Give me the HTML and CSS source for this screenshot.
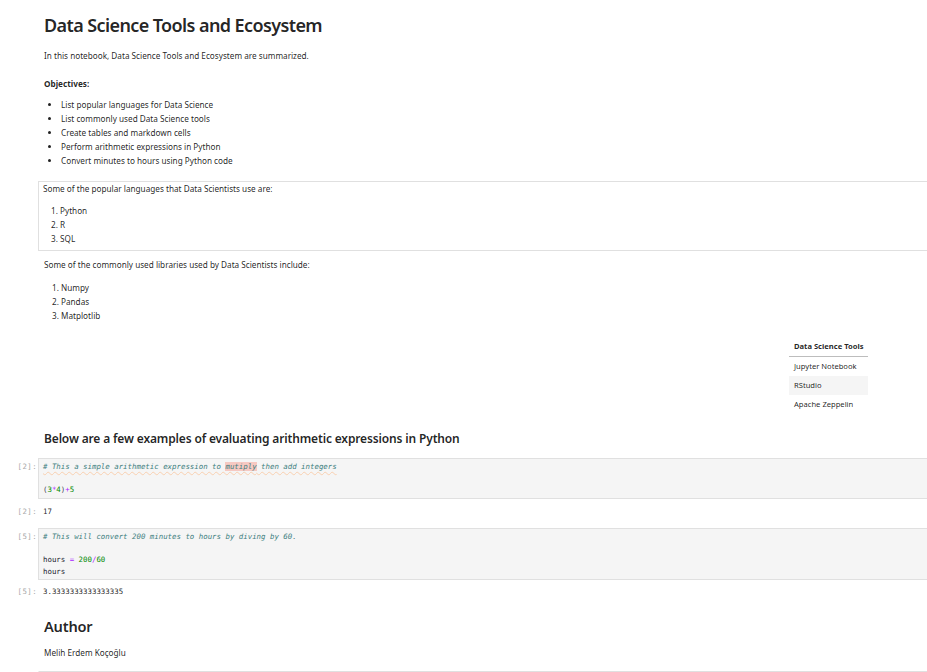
FILE: index.html
```html
<!DOCTYPE html>
<html>
<head>
<meta charset="utf-8">
<link rel="stylesheet" href="styles.css">
</head>
<body>
<div class="nb">
  <div class="cell md first">
    <div class="body">
      <h1>Data Science Tools and Ecosystem</h1>
      <p class="intro">In this notebook, Data Science Tools and Ecosystem are summarized.</p>
      <p class="obj"><strong>Objectives:</strong></p>
      <ul class="list">
        <li>List popular languages for Data Science</li>
        <li>List commonly used Data Science tools</li>
        <li>Create tables and markdown cells</li>
        <li>Perform arithmetic expressions in Python</li>
        <li>Convert minutes to hours using Python code</li>
      </ul>
    </div>
  </div>

  <div class="cell md boxed">
    <div class="body">
      <p>Some of the popular languages that Data Scientists use are:</p>
      <ol class="list">
        <li>Python</li>
        <li>R</li>
        <li>SQL</li>
      </ol>
    </div>
  </div>

  <div class="cell md libs">
    <div class="body">
      <p>Some of the commonly used libraries used by Data Scientists include:</p>
      <ol class="list">
        <li>Numpy</li>
        <li>Pandas</li>
        <li>Matplotlib</li>
      </ol>
    </div>
  </div>

  <div class="cell md tablecell">
    <div class="body">
      <table class="tools">
        <thead><tr><th>Data Science Tools</th></tr></thead>
        <tbody>
          <tr><td>Jupyter Notebook</td></tr>
          <tr><td>RStudio</td></tr>
          <tr><td>Apache Zeppelin</td></tr>
        </tbody>
      </table>
    </div>
  </div>

  <div class="cell md h2cell">
    <div class="body"><h2>Below are a few examples of evaluating arithmetic expressions in Python</h2></div>
  </div>

  <div class="cell code c1">
    <div class="prompt">[2]:</div>
    <div class="editor"><pre><span class="cm-comment wavy"># This a simple arithmetic expression to <span class="misspelled">mutiply</span> then add integers</span>
 
<span class="cm-bracket">(</span><span class="cm-number">3</span><span class="cm-op">*</span><span class="cm-number">4</span><span class="cm-bracket">)</span><span class="cm-op">+</span><span class="cm-number">5</span></pre></div>
  </div>
  <div class="cell out o1">
    <div class="prompt">[2]:</div>
    <div class="output"><pre>17</pre></div>
  </div>

  <div class="cell code c2">
    <div class="prompt">[5]:</div>
    <div class="editor"><pre><span class="cm-comment"># This will convert 200 minutes to hours by diving by 60.</span>
 
<span class="cm-var">hours</span> <span class="cm-op">=</span> <span class="cm-number">200</span><span class="cm-op">/</span><span class="cm-number">60</span>
<span class="cm-var">hours</span></pre></div>
  </div>
  <div class="cell out o2">
    <div class="prompt">[5]:</div>
    <div class="output"><pre>3.3333333333333335</pre></div>
  </div>

  <div class="cell md author">
    <div class="body">
      <h2 class="auth">Author</h2>
      <p class="name">Melih Erdem Koçoğlu</p>
    </div>
  </div>

  <div class="cell md lastcell">
    <div class="body"></div>
  </div>
</div>
</body>
</html>
```

FILE: styles.css
```css
html, body {
  margin: 0;
  padding: 0;
  background: #ffffff;
  overflow: hidden;
}

body {
  font-family: "Noto Sans", "Open Sans", sans-serif;
  font-size: 8.2px;
  line-height: 14px;
  color: rgba(0, 0, 0, 0.87);
}

.nb {
  padding-top: 13px;
  width: 1000px;
}

.cell {
  display: flex;
  align-items: flex-start;
}

.cell.md .body {
  margin-left: 38px;
  padding-left: 5px;
  flex: 1;
  border: 1px solid transparent;
  border-width: 0 1px;
}

h1 {
  margin: 0;
  font-size: 18px;
  line-height: 24px;
  font-weight: 600;
  letter-spacing: -0.6px;
  color: rgba(0, 0, 0, 0.87);
}

.intro {
  margin: 12px 0 0;
}

.obj {
  margin: 14px 0 0;
}

.obj strong {
  font-weight: 700;
}

p {
  margin: 0;
}

.list {
  margin: 7px 0 0;
  padding-left: 17px;
}

ul.list {
  list-style: disc;
}

.list li {
  line-height: 14px;
}

.boxed {
  margin-top: 13px;
}

.boxed .body {
  border: 1px solid #e0e0e0 !important;
  padding-top: 0;
  padding-bottom: 4px;
  padding-left: 4px !important;
}

.boxed .list {
  margin-top: 8px;
}

.libs {
  margin-top: 7px;
}

.libs .list {
  margin-top: 9px;
}

.tablecell {
  margin-top: 14px;
}

.tools {
  margin-left: 745px;
  border-collapse: collapse;
  font-size: 7.6px;
  line-height: 19px;
}

.tools th {
  text-align: left;
  font-weight: 700;
  padding: 0 4px 0 5px;
  border-bottom: 1px solid #bdbdbd;
}

.tools td {
  padding: 0 4px 0 5px;
  line-height: 19px;
}

.tools tbody tr:nth-child(even) {
  background: #f5f5f5;
}

.h2cell {
  margin-top: 16px;
}

h2 {
  margin: 0;
  font-size: 12px;
  line-height: 18px;
  font-weight: 600;
  letter-spacing: -0.15px;
  color: rgba(0, 0, 0, 0.87);
}

.prompt {
  width: 38px;
  flex: none;
  box-sizing: border-box;
  padding-right: 1px;
  text-align: right;
  font-family: "DejaVu Sans Mono", monospace;
  font-size: 7.4px;
  line-height: 11.5px;
  letter-spacing: 0.4px;
  color: #a8a8a8;
}

.code .prompt {
  padding-top: 3px;
}

.editor {
  flex: 1;
  background: #f5f5f5;
  border: 1px solid #e0e0e0;
  padding: 2px 5px 2px 4px;
}

pre {
  margin: 0;
  font-family: "DejaVu Sans Mono", monospace;
  font-size: 7.4px;
  line-height: 11.5px;
  color: rgba(0, 0, 0, 0.87);
  white-space: pre;
}

.output {
  flex: 1;
  padding-left: 5px;
}

.c1 {
  margin-top: 10px;
}

.o1 {
  margin-top: 7px;
}

.c2 {
  margin-top: 11px;
}

.o2 {
  margin-top: 6px;
}

.author {
  margin-top: 18px;
}

.auth {
  font-size: 14.6px;
  line-height: 20px;
  letter-spacing: -0.2px;
}

.name {
  margin-top: 10px;
}

.lastcell {
  margin-top: 11px;
}

.lastcell .body {
  border-top: 1px solid #e0e0e0 !important;
  height: 10px;
}

.cm-comment {
  color: #408080;
  font-style: italic;
}

.wavy {
  text-decoration: underline wavy #f9d0b0;
  text-decoration-thickness: 1px;
  text-underline-offset: 2px;
}

.misspelled {
  background: #f6c9c2;
}

.cm-number {
  color: #008800;
}

.cm-op {
  color: #aa22ff;
}

.cm-bracket {
  color: #445;
}

.cm-var {
  color: #1a1a2e;
}
```
